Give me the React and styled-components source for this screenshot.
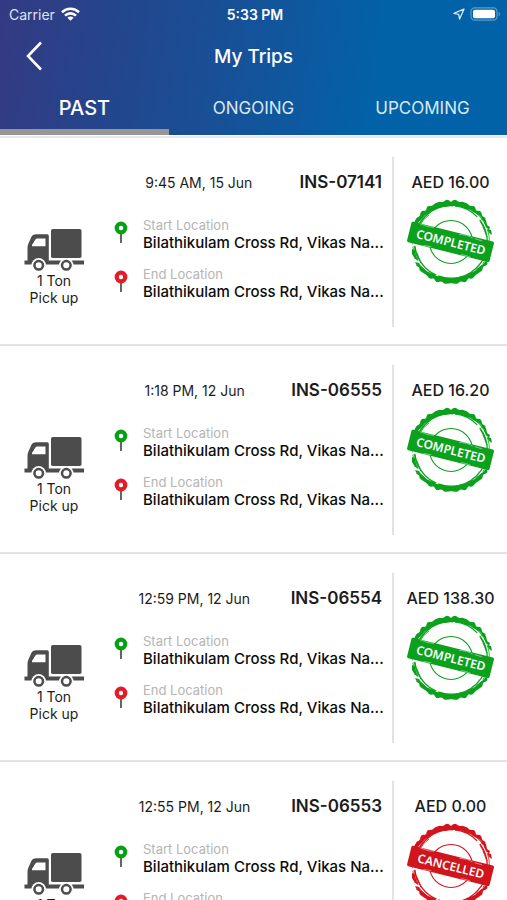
import styled, { createGlobalStyle, ThemeProvider } from 'styled-components';

const theme = {
  text: '#1c1c1c',
  muted: '#b4b4b4',
  line: '#e3e3e3',
  truck: '#4c4c4c',
  start: '#0a9f14',
  end: '#e31b23',
  completed: '#0ba11c',
  cancelled: '#d2141c',
};

const GlobalStyles = createGlobalStyle`
  * {
    box-sizing: border-box;
  }

  body {
    margin: 0;
    background-color: #fff;
    color: ${(props) => props.theme.text};
    font-family: Inter, 'Liberation Sans', sans-serif;
  }

  h1,
  h2,
  p,
  ul {
    margin: 0;
    padding: 0;
    list-style: none;
  }
`;

const Screen = styled.div`
  display: flex;
  flex-direction: column;
  height: 100vh;
`;

const Header = styled.header`
  flex-shrink: 0;
  color: #fff;
  background: linear-gradient(98deg, #343a83 0%, #24458c 22%, #14539a 50%, #0262a8 74%);
`;

const StatusBar = styled.div`
  display: grid;
  grid-template-columns: 1fr auto 1fr;
  align-items: center;
  height: 28px;
  padding: 0 6px 0 9px;
  font-size: 14px;
`;

const Carrier = styled.span`
  display: flex;
  align-items: center;
  gap: 6px;
  color: #dfe3f0;
`;

const Clock = styled.span`
  font-weight: 600;
`;

const StatusIcons = styled.span`
  display: flex;
  align-items: center;
  justify-content: flex-end;
  gap: 5px;
`;

const TitleBar = styled.div`
  display: grid;
  grid-template-columns: 68px 1fr 68px;
  align-items: center;
  height: 56px;

  h1 {
    font-size: 19px;
    font-weight: 500;
    text-align: center;
  }
`;

const BackButton = styled.button`
  display: flex;
  align-items: center;
  justify-content: center;
  height: 100%;
  padding: 0;
  border: none;
  background: none;
  color: inherit;
  cursor: pointer;
`;

const Tabs = styled.nav`
  display: grid;
  grid-template-columns: repeat(3, 1fr);
`;

const Tab = styled.button`
  height: 51px;
  padding: 2px 0 0;
  border: none;
  border-bottom: 6px solid ${(props) => (props.$active ? '#969696' : 'transparent')};
  background: none;
  color: ${(props) => (props.$active ? '#fff' : '#dbe8f4')};
  font-family: inherit;
  font-size: ${(props) => (props.$active ? '20px' : '17px')};
  font-weight: ${(props) => (props.$active ? 500 : 400)};
  cursor: pointer;
`;

const TripList = styled.ul`
  flex: 1;
  min-height: 0;
  overflow-y: auto;
  scrollbar-width: none;
  border-top: 1px solid #fff;

  &::before {
    content: '';
    display: block;
    height: 2px;
    background-color: #e8e8e8;
  }
`;

const TripRow = styled.li`
  display: grid;
  grid-template-columns: 108px 1fr 115px;
  height: 208px;
  padding: 19px 0 17px;
  border-bottom: 2px solid ${(props) => props.theme.line};
`;

const Vehicle = styled.div`
  display: flex;
  flex-direction: column;
  align-items: center;
  padding-top: 71px;
  font-size: 14px;
  line-height: 17px;
  text-align: center;
`;

const Details = styled.div`
  min-width: 0;
  padding: 13px 10px 0 0;
`;

const Summary = styled.div`
  display: flex;
  align-items: center;
  gap: 10px;
  height: 24px;
  margin-bottom: 23px;

  time {
    flex: 1;
    font-size: 14px;
    text-align: center;
  }

  h2 {
    font-size: 17px;
    font-weight: 600;
  }
`;

const Stop = styled.div`
  display: grid;
  grid-template-columns: 26px 1fr;
  align-items: start;
  height: 49px;
  padding-left: 6px;

  svg {
    margin-top: 4px;
  }
`;

const StopText = styled.div`
  min-width: 0;
  padding-left: 3px;
`;

const StopLabel = styled.p`
  font-size: 13px;
  line-height: 17px;
  color: ${(props) => props.theme.muted};
`;

const Address = styled.p`
  font-size: 15px;
  font-weight: 500;
  line-height: 18px;
  color: #0c0c0c;
  white-space: nowrap;
`;

const Outcome = styled.div`
  display: flex;
  flex-direction: column;
  align-items: center;
  padding-top: 13px;
  border-left: 2px solid ${(props) => props.theme.line};
`;

const Price = styled.p`
  font-size: 16px;
  font-weight: 500;
  line-height: 24px;
  white-space: nowrap;
`;

const StampSvg = styled.svg`
  flex-shrink: 0;
  margin-top: 4px;
  color: ${(props) => props.theme[props.$status]};

  text {
    font-family: 'Noto Sans', sans-serif;
    font-size: 12px;
    font-weight: 600;
    fill: #fff;
  }
`;

const TruckSvg = styled.svg`
  color: ${(props) => props.theme.truck};
`;

const PinSvg = styled.svg`
  color: ${(props) => props.theme[props.$kind]};
`;

function WifiIcon() {
  return (
    <svg width="19" height="14" viewBox="0 0 19 14" fill="none" stroke="#fff" strokeWidth="2.6" aria-hidden="true">
      <path d="M1 5.2a12.2 12.2 0 0 1 17 0" />
      <path d="M4 8.6a7.8 7.8 0 0 1 11 0" />
      <path d="M9.5 13.8 6.4 10.8a4.4 4.4 0 0 1 6.2 0Z" fill="#fff" stroke="none" />
    </svg>
  );
}

function LocationIcon() {
  return (
    <svg width="12" height="12" viewBox="0 0 12 12" fill="none" stroke="#dceaf6" strokeWidth="1.3" strokeLinejoin="round" aria-hidden="true">
      <path d="M11 1 1 5.4l4.7.9.9 4.7Z" />
    </svg>
  );
}

function BatteryIcon() {
  return (
    <svg width="31" height="14" viewBox="0 0 31 14" fill="none" aria-hidden="true">
      <rect x="1" y="0.8" width="26" height="12.4" rx="3.6" stroke="#5c9bcb" strokeWidth="1.2" />
      <rect x="3" y="2.8" width="22" height="8.4" rx="2" fill="#fff" />
      <path d="M28.6 4.8c1.8.6 1.8 3.8 0 4.4Z" fill="#5c9bcb" />
    </svg>
  );
}

function BackIcon() {
  return (
    <svg width="18" height="30" viewBox="0 0 18 30" fill="none" stroke="#fff" strokeWidth="2.6" aria-hidden="true">
      <path d="M16 1.5 3 15 16 28.5" />
    </svg>
  );
}

function Truck() {
  return (
    <TruckSvg width="60" height="44" viewBox="0 0 60 44" aria-hidden="true">
      <rect x="27" y="1" width="30.5" height="29" rx="1.8" fill="currentColor" />
      <path
        fill="currentColor"
        fillRule="evenodd"
        d="M0.500 32.500h3V19.500c0-1.400.3-2.400.9-3.700L7.300 9C8.400 7 9.600 6.200 12 6.200h11c1.200 0 1.800.6 1.800 1.800v24.500H60V36.500H0.500ZM8 18.200h13.500V10.600h-7.500c-1.600 0-2.400.4-3.100 1.700L8 16.900Z"
      />
      <circle cx="14.7" cy="37.300" r="7.200" fill="#fff" />
      <circle cx="42.300" cy="37.300" r="7.200" fill="#fff" />
      <circle cx="14.700" cy="37.300" r="4.300" fill="#fff" stroke="currentColor" strokeWidth="2.500" />
      <circle cx="42.300" cy="37.300" r="4.300" fill="#fff" stroke="currentColor" strokeWidth="2.500" />
    </TruckSvg>
  );
}

function Pin({ kind }) {
  return (
    <PinSvg $kind={kind} width="14" height="22" viewBox="0 0 14 22" aria-hidden="true">
      <path d="M7 12v10" stroke="#555" strokeWidth="1.8" />
      <circle cx="7" cy="7" r="4.300" fill="#fff" stroke="currentColor" strokeWidth="4.200" />
    </PinSvg>
  );
}

// ring of the stamp between two angles, wavy outside and smooth inside
function ringPath(from, to, outer, inner) {
  const points = [];
  for (let a = from; a <= to; a += 2) {
    const rad = (a * Math.PI) / 180;
    const r = outer + 1.7 * Math.abs(Math.sin(rad * 14)) + 0.4 * Math.sin(rad * 37);
    points.push([44 + r * Math.cos(rad), 44 + r * Math.sin(rad)]);
  }
  for (let a = to; a >= from; a -= 3) {
    const rad = (a * Math.PI) / 180;
    const mid = Math.sin(((a - from) / (to - from)) * Math.PI);
    const r = outer - (outer - inner) * Math.sqrt(Math.max(mid, 0)) + 0.3 * Math.sin(rad * 23);
    points.push([44 + r * Math.cos(rad), 44 + r * Math.sin(rad)]);
  }
  return `M${points.map(([x, y]) => `${x.toFixed(1)} ${y.toFixed(1)}`).join('L')}Z`;
}

const topRing = ringPath(198, 326, 40.5, 36);
const bottomRing = ringPath(28, 146, 40.5, 36);

function Stamp({ status }) {
  return (
    <StampSvg $status={status} width="88" height="88" viewBox="0 0 88 88">
      <g fill="currentColor">
        <path d={topRing} />
        <path d={bottomRing} />
        <path d="M76 19l3 3 1 5 3 2-1 3-3-3-2-5-3-3ZM80 31l4 1 1 5-3-2ZM5 51l3 1 1 6 2 4-3-1-3-5ZM8 64l4 1 2 5-4-2Z" />
      </g>
      <g fill="none" stroke="currentColor">
        <circle cx="44" cy="44" r="36.300" strokeWidth="1.300" strokeDasharray="70 2 38 3 60 2 25 4" />
        <circle cx="44" cy="44" r="38.500" strokeWidth="0.800" strokeDasharray="14 3 6 2 22 4" />
        <circle cx="44" cy="44" r="21.500" strokeWidth="1.100" />
        <path d="M73 23l5 9M75 20l6 10M76 29l4 10M7 48l4 15M10 55l4 10M17 18l-5 8M22 17q-6 4-9 10" strokeWidth="0.900" />
      </g>
      <g transform="rotate(14 44 44)">
        <rect x="1" y="33.500" width="85" height="21" rx="1.500" fill="currentColor" />
        <path d="M10 34l9 .6 5-.8M50 34.500l8-.8 6 1M66 35l8 .4M18 54l8-.6M57 53.500l9 .3" stroke="#fff" strokeOpacity="0.600" strokeWidth="0.700" fill="none" />
        <text x="44" y="48.500" textAnchor="middle">
          {status.toUpperCase()}
        </text>
      </g>
    </StampSvg>
  );
}

const tabs = ['PAST', 'ONGOING', 'UPCOMING'];

const address = 'Bilathikulam Cross Rd, Vikas Na...';

const trips = [
  { id: 'INS-07141', time: '9:45 AM, 15 Jun', price: 'AED 16.00', status: 'completed' },
  { id: 'INS-06555', time: '1:18 PM, 12 Jun', price: 'AED 16.20', status: 'completed' },
  { id: 'INS-06554', time: '12:59 PM, 12 Jun', price: 'AED 138.30', status: 'completed' },
  { id: 'INS-06553', time: '12:55 PM, 12 Jun', price: 'AED 0.00', status: 'cancelled' },
];

function Trip({ trip }) {
  return (
    <TripRow>
      <Vehicle>
        <Truck />
        <p>1 Ton</p>
        <p>Pick up</p>
      </Vehicle>
      <Details>
        <Summary>
          <time>{trip.time}</time>
          <h2>{trip.id}</h2>
        </Summary>
        <Stop>
          <Pin kind="start" />
          <StopText>
            <StopLabel>Start Location</StopLabel>
            <Address>{address}</Address>
          </StopText>
        </Stop>
        <Stop>
          <Pin kind="end" />
          <StopText>
            <StopLabel>End Location</StopLabel>
            <Address>{address}</Address>
          </StopText>
        </Stop>
      </Details>
      <Outcome>
        <Price>{trip.price}</Price>
        <Stamp status={trip.status} />
      </Outcome>
    </TripRow>
  );
}

function App() {
  return (
    <ThemeProvider theme={theme}>
      <GlobalStyles />
      <Screen>
        <Header>
          <StatusBar>
            <Carrier>
              Carrier
              <WifiIcon />
            </Carrier>
            <Clock>5:33 PM</Clock>
            <StatusIcons>
              <LocationIcon />
              <BatteryIcon />
            </StatusIcons>
          </StatusBar>
          <TitleBar>
            <BackButton aria-label="Back">
              <BackIcon />
            </BackButton>
            <h1>My Trips</h1>
          </TitleBar>
          <Tabs>
            {tabs.map((tab, i) => (
              <Tab key={tab} $active={i === 0}>
                {tab}
              </Tab>
            ))}
          </Tabs>
        </Header>
        <TripList>
          {trips.map((trip) => (
            <Trip key={trip.id} trip={trip} />
          ))}
        </TripList>
      </Screen>
    </ThemeProvider>
  );
}

export default App;
